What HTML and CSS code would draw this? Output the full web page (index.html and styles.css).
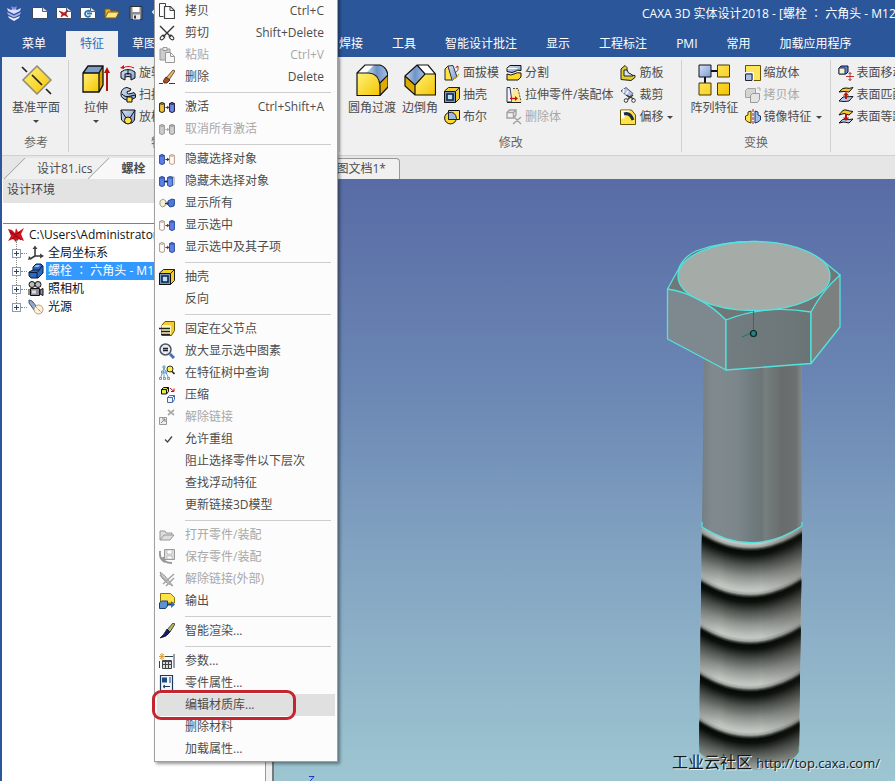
FILE: index.html
```html
<!DOCTYPE html>
<html lang="zh-CN">
<head>
<meta charset="utf-8">
<title>CAXA 3D 实体设计2018</title>
<link rel="stylesheet" href="styles.css">
</head>
<body>
<svg class="sprite" aria-hidden="true">
  <defs>
    <linearGradient id="gy" x1="0" y1="0" x2="1" y2="1"><stop offset="0" stop-color="#fff27a"/><stop offset="1" stop-color="#f5c400"/></linearGradient>
    <linearGradient id="gb" x1="0" y1="0" x2="1" y2="1"><stop offset="0" stop-color="#d5e2f7"/><stop offset="1" stop-color="#7d9bd0"/></linearGradient>
    <linearGradient id="gs" x1="0" y1="0" x2="1" y2="0"><stop offset="0" stop-color="#c8daf0"/><stop offset=".5" stop-color="#6f93c8"/><stop offset="1" stop-color="#a9c2e2"/></linearGradient>
  </defs>
  <symbol id="logo" viewBox="0 0 16 16"><path d="M1 3l4 2 3-2 3 2 4-2-1 3-6 3-6-3z" fill="#d9dcff"/><path d="M5 1l3 1.500L11 1l-1 3-2 1-2-1z" fill="#8b8fe8"/><path d="M1 7l7 3.500L15 7l-1 2.500-6 3-6-3z" fill="#a9adf6"/><path d="M2 11l6 2.500 6-2.500-1 2-5 3-5-3z" fill="#f0f1ff"/></symbol>
  <symbol id="page" viewBox="0 0 16 16"><path d="M.5 2.500h10l5 4v7H.5z" fill="#fff" stroke="#3b4a60"/><path d="M10.500 2.500v4h5" fill="#dbe2ec" stroke="#55657c"/></symbol>
  <symbol id="pagex" viewBox="0 0 16 16"><use href="#page"/><path d="M3 6l3 1 2 1 4-3-2 4 2 3-4-2-3 2 1-3z" fill="#cf1417" stroke="#8d0b0d" stroke-width=".5"/></symbol>
  <symbol id="pagec" viewBox="0 0 16 16"><use href="#page"/><path d="M10 6.500a3 3 0 1 0 .5 4M7 8.500h5" fill="none" stroke="#2779b8" stroke-width="1.800"/></symbol>
  <symbol id="open" viewBox="0 0 16 16"><path d="M1 13V4h5l1 2h6v2" fill="#e8b530" stroke="#7a5a0b"/><path d="M1 13l3-6h11l-3 6z" fill="#ffe481" stroke="#7a5a0b"/></symbol>
  <symbol id="save" viewBox="0 0 16 16"><path d="M2 1.500h12v13H3l-1-1z" fill="#8a8d93" stroke="#2b2f36"/><path d="M4.500 2h7v5h-7z" fill="#fff"/><path d="M5 9.500h7v5H5z" fill="#e9eaec"/><path d="M6 10.500h2v3H6z" fill="#333"/></symbol>
  <symbol id="undo" viewBox="0 0 16 16"><path d="M5 3L1 7l4 4M1 7h12" fill="none" stroke="#dfe8f6" stroke-width="2"/></symbol>

  <symbol id="plane" viewBox="0 0 32 32"><path d="M17 2l14 14-14 14L3 16z" fill="url(#gy)" stroke="#8b8a78" stroke-width="1.500"/><path d="M2 3l5 5M12 11l10 10M26 25l5 5" stroke="#222" stroke-width="1.700"/></symbol>
  <symbol id="extrude" viewBox="0 0 32 32"><path d="M3 9l5-7h15l-4 7z" fill="#7c9fc9"/><path d="M3 9h16v19H3z" fill="url(#gy)"/><path d="M19 9l4-7v19l-4 7z" fill="#d9a500"/><path d="M3 9l5-7h15v19l-4 7H3zh16v19M19 9l4-7" fill="none" stroke="#111" stroke-width="1.300"/><path d="M27 27V7" stroke="#b31212" stroke-width="2"/><path d="M24 9l3-6 3 6z" fill="#b31212"/></symbol>
  <symbol id="revolve" viewBox="0 0 16 16"><path d="M1 7q7-5 14 0v6l-4 2v-3q-3-1-6 0v3l-4-2z" fill="url(#gb)" stroke="#111"/><path d="M5 12V9q3-1 6 0v3M8 5v5" fill="none" stroke="#111"/><path d="M3 3q5-3 11 0" fill="none" stroke="#c11" stroke-width="1.200"/><path d="M0 3l4-3v4z" fill="#c11"/></symbol>
  <symbol id="sweep" viewBox="0 0 16 16"><path d="M1 6q1-5 6-5.500l4 1.500-1 2q-4 0-3 2 1 1.500 4 .5l3-1 1.500 2v3L9 14l-5-2Q0 10 1 6z" fill="url(#gb)" stroke="#111"/><path d="M2 7q3 4 9 2l4-1" fill="none" stroke="#111"/><path d="M7 10h5v5H7z" fill="#ffe14a" stroke="#111"/></symbol>
  <symbol id="loft" viewBox="0 0 16 16"><path d="M1 1h14l-.5 10L12 14H5l-3.500-3z" fill="url(#gb)" stroke="#111"/><path d="M1 1l5 8M15 1l-5 8" stroke="#111" fill="none"/><circle cx="8" cy="11.500" r="3.500" fill="#ffe14a" stroke="#111"/></symbol>
  <symbol id="fillet" viewBox="0 0 32 32"><path d="M1 9l8-8h15q6 1 8 9l-8 8z" fill="#fff"/><path d="M10 9l8-8h6q7 1 8 10l-7 8q-3-9-12-10z" fill="url(#gs)"/><path d="M1 9h12q10 1 11 12v11H1z" fill="url(#gy)"/><path d="M24 19l8-8v12l-8 9z" fill="#e0ab00"/><path d="M1 9l8-8h15q7 2 8 11v11l-8 8.500H1zh12q10 1 11 12v11M24 19l8-8" fill="none" stroke="#111" stroke-width="1.200"/></symbol>
  <symbol id="chamfer" viewBox="0 0 32 32"><path d="M13 1h11l7.500 9H21z" fill="#fff"/><path d="M13 1l8 9-10 11-10-9z" fill="url(#gs)"/><path d="M21 10h10.500v21H11V20z" fill="url(#gy)"/><path d="M1 12l10 9v10L1 22z" fill="#e0ab00"/><path d="M1 12L13 1h11l7.500 9v21H11L1 22zl10 9v10M11 21l10-11h10.500M13 1l8 9" fill="none" stroke="#111" stroke-width="1.200"/></symbol>
  <symbol id="draft" viewBox="0 0 16 16"><path d="M1 4l3-3 5 14H1z" fill="#ffe14a" stroke="#222"/><path d="M4 1l5-.5L13 12l-5 3z" fill="url(#gb)" stroke="#334"/><path d="M8 15l5-3 2-3" fill="none" stroke="#c9a400"/><path d="M12 7q3-1 2-5" fill="none" stroke="#b44"/><path d="M11 3l2-2.500L15.500 2z" fill="#b44"/></symbol>
  <symbol id="shell" viewBox="0 0 16 16"><path d="M.5 4l4-3.500h11v11l-4 4H.5z" fill="#f4cf2a" stroke="#222"/><path d="M.5 4.500h11v11H.5z" fill="#7897c4" stroke="#111"/><path d="M3 7h6v6H3z" fill="#b9e3ef" stroke="#10234a" stroke-width="1.600"/><path d="M11.500 4.500l4-4" stroke="#222"/></symbol>
  <symbol id="bool" viewBox="0 0 16 16"><circle cx="6.500" cy="9" r="5.900" fill="#ffd92b" stroke="#111"/><path d="M4.500 1.500h11v9h-11z" fill="#ffe14a" stroke="#111"/><path d="M4.500 3.500q7-1.500 8 6v1h-8z" fill="#9fb9de" stroke="#223"/></symbol>
  <symbol id="split" viewBox="0 0 16 16"><path d="M1 3l3-2.500h11v5q-4-1-6 1t-8 0z" fill="url(#gb)" stroke="#111"/><path d="M1 9q4 2 7 0t7-1v4l-3 3H1z" fill="#ffda2d" stroke="#111"/><path d="M1.500 3.500h10" stroke="#fff"/></symbol>
  <symbol id="stretch" viewBox="0 0 16 16"><path d="M1 15V.5h3l2 14.500z" fill="#eef3fb" stroke="#335"/><path d="M7 1h5l3 14H6z" fill="#ffe98a"/><path d="M7 1.500h5l3 13" fill="none" stroke="#555" stroke-dasharray="2 1"/><path d="M4 11.500h6" stroke="#c11" stroke-width="1.400"/><path d="M9 9l3 2.500L9 14z" fill="#c11"/><path d="M1 15.500h14" stroke="#222"/></symbol>
  <symbol id="delbody" viewBox="0 0 16 16"><path d="M1 3.500L3.500 1H10v5L7.500 9H1zh6.500V9M7.500 3.500L10 1M7 7l8 8M15 8l-8 7" fill="none" stroke="#a2a2a2" stroke-width="1.400"/></symbol>
  <symbol id="rib" viewBox="0 0 16 16"><path d="M1 4l4-3.500 2 2v7l8 1v2l-4 3-10-1z" fill="#e2cd2b" stroke="#222"/><path d="M4 5v6h9L11 9Q8 9 7 5z" fill="#d8e6f6" stroke="#222"/></symbol>
  <symbol id="trim" viewBox="0 0 16 16"><path d="M1 4l5-3.500 7 6-4 4z" fill="#b4bfe6" stroke="#556"/><path d="M4 2l-1 4M8 4L6 8" stroke="#fff" stroke-width="1.500"/><path d="M6 8l8 4M13 8l-6 5" stroke="#333" stroke-width="1.200"/><circle cx="6" cy="13.500" r="1.800" fill="#fff" stroke="#333"/><circle cx="13.500" cy="13.500" r="1.800" fill="#fff" stroke="#333"/></symbol>
  <symbol id="offset" viewBox="0 0 16 16"><path d="M.5 1h11l4 5v9.500H.5z" fill="#ffe14a" stroke="#665300"/><path d="M1 1.500h9L4 9l-3 1z" fill="#fff"/><path d="M4 5q6-2 9 6" fill="none" stroke="#1b2a44" stroke-width="3"/></symbol>
  <symbol id="array" viewBox="0 0 32 32"><path d="M13 7h7M7 13v7" stroke="#111" stroke-width="2"/><path d="M1 1h12v12H1z" fill="url(#gb)" stroke="#112"/><path d="M19.500 1h12v12h-12zM1 19h12v12H1zM19.500 19h12v12h-12z" fill="url(#gy)" stroke="#4b3900"/></symbol>
  <symbol id="scale" viewBox="0 0 16 16"><path d="M.5.500h15v15H.5z" fill="#ffe45c" stroke="#665300"/><path d="M.5 7.500h8v8h-8z" fill="#a9bfe8" stroke="#fff"/><path d="M.5 9h6.500v6.500H.5z" fill="#a9bfe8" stroke="#223"/></symbol>
  <symbol id="copybody" viewBox="0 0 16 16"><path d="M.5 3.500l2-2h8v7l-2 2h-8z" fill="#d4d4d4" stroke="#a3a3a3"/><path d="M5.500 8.500l2-2h7v6l-2 3h-7z" fill="#e3e3e3" stroke="#999"/><path d="M12 1h3v3" fill="none" stroke="#aaa"/></symbol>
  <symbol id="mirror" viewBox="0 0 16 16"><path d="M6 2v12l-3-1-2.500-2V7L3 6V3z" fill="#ffe14a" stroke="#443800"/><path d="M10 2v12l3-1 2.500-2V7L13 6V3z" fill="#9fbce9" stroke="#1c3566"/><path d="M8 0v16" stroke="#b11" stroke-dasharray="3 1"/></symbol>
  <symbol id="facemove" viewBox="0 0 16 16"><path d="M1 3l2-2h7v6L8 9H1z" fill="#5d87d6" stroke="#114"/><path d="M1 3h6v6H1z" fill="#eef4d0" stroke="#334"/><path d="M12 7.500v8M8 11.500h8M10.500 9L12 7.500 13.500 9M10.500 14l1.500 1.500 1.500-1.500" fill="none" stroke="#b33"/></symbol>
  <symbol id="facematch" viewBox="0 0 16 16"><path d="M1 5q4-5 7-4t7-.5L11 5Q6 4 1 5z" fill="#f5c92d" stroke="#111"/><path d="M1 14l4-4 10-.5L11 14q-5 1-10 0z" fill="#b5c9ee" stroke="#111"/><path d="M8 7v5" stroke="#b11" stroke-width="2"/><path d="M5 8.500h6L8 5z" fill="#b11"/></symbol>
  <symbol id="faceoffset" viewBox="0 0 16 16"><path d="M1 6q4-6 7-5t7 1.500L11 6Q6 3 1 6z" fill="#f5c92d" stroke="#111"/><path d="M1 14q4-5 7-4t7 0L11 14q-5-2-10 0z" fill="#b5c9ee" stroke="#111"/><path d="M8 5v5" stroke="#b11" stroke-width="2"/><path d="M5 8.500h6L8 12z" fill="#b11"/></symbol>

  <symbol id="copy" viewBox="0 0 16 16"><path d="M.5.500h6v3M.5.500v13h4" fill="none" stroke="#444"/><path d="M5.500 3.500h6l4 4v8h-10z" fill="#fff" stroke="#444" stroke-width="1.200"/><path d="M11 3.500v4h4.500" fill="none" stroke="#444"/></symbol>
  <symbol id="cut" viewBox="0 0 16 16"><path d="M1 1l11 11M15 1L4 12" stroke="#333" stroke-width="1.400"/><ellipse cx="3.500" cy="12.500" rx="2.700" ry="1.700" transform="rotate(-45 3.500 12.500)" fill="none" stroke="#333"/><ellipse cx="12.500" cy="12.500" rx="2.700" ry="1.700" transform="rotate(45 12.500 12.500)" fill="none" stroke="#333"/></symbol>
  <symbol id="paste" viewBox="0 0 16 16"><path d="M1 2h10v11H1z" fill="#ccc" stroke="#999"/><path d="M4 .5h4v3H4z" fill="#eee" stroke="#999"/><path d="M6.500 5.500h5l4 4v6h-9z" fill="#f7f7f7" stroke="#999"/><path d="M11.500 5.500v4h4" fill="none" stroke="#999"/></symbol>
  <symbol id="erase" viewBox="0 0 16 16"><path d="M14 1l2 1-6 9-3-2z" fill="#e7b36e" stroke="#3a2614" stroke-width=".7"/><path d="M7 8l4 3-3 3H5q-2-2 2-6z" fill="#a8502e" stroke="#3a1a10" stroke-width=".8"/><path d="M0 14.500h4M10 14.500h6" stroke="#1f3e7a"/></symbol>
  <symbol id="can" viewBox="0 0 6 11"><path d="M.6 1.500v8q2.400 2 4.800 0v-8Q3-.5.6 1.500q2.400 1.600 4.800 0" stroke-width="1"/></symbol>
  <symbol id="link" viewBox="0 0 5 6"><path d="M0 3h3" stroke="currentColor" stroke-width="1.300"/><path d="M2 .8L5 3 2 5.200z" fill="currentColor"/></symbol>
  <symbol id="pair-act" viewBox="0 0 16 16"><use href="#can" y="3" width="6" height="11" fill="#f3c43a" stroke="#222"/><use href="#can" x="10" y="3" width="6" height="11" fill="#7289e2" stroke="#14143c"/><use href="#link" x="6" y="6" width="5" height="5" color="#a31b1b"/></symbol>
  <symbol id="pair-off" viewBox="0 0 16 16"><use href="#can" y="3" width="6" height="11" fill="#ccc" stroke="#999"/><use href="#can" x="10" y="3" width="6" height="11" fill="#d0d0d0" stroke="#888"/><use href="#link" x="6" y="6" width="5" height="5" color="#aaa"/></symbol>
  <symbol id="pair-hide" viewBox="0 0 16 16"><use href="#can" y="3" width="6" height="11" fill="#5c80e8" stroke="#2c4ba0"/><use href="#can" x="10" y="3" width="6" height="11" fill="#fff8ee" stroke="#b49e90"/><use href="#link" x="6" y="6" width="5" height="5" color="#6a1b2b"/></symbol>
  <symbol id="pair-both" viewBox="0 0 16 16"><use href="#can" y="3" width="6" height="11" fill="#5c80e8" stroke="#2c4ba0"/><use href="#can" x="10" y="3" width="6" height="10" fill="#dfe3ee" stroke="#9aa"/><use href="#can" x="8" y="3" width="6" height="11" fill="#6c90f0" stroke="#2c4ba0"/><use href="#link" x="5" y="6" width="4" height="5" color="#222a55"/></symbol>
  <symbol id="pair-all" viewBox="0 0 16 16"><path d="M1 6l3-2 3 2-1 5-3 1-2-2z" fill="#f3efdc" stroke="#aaa084"/><path d="M9 6l4-2 3 1-1 6-4 1-2-2z" fill="#4c78dc" stroke="#244790"/><use href="#link" x="6" y="6" width="4" height="5" color="#333"/></symbol>
  <symbol id="pair-show" viewBox="0 0 16 16"><use href="#can" y="3" width="6" height="11" fill="#fffaf4" stroke="#a99a94"/><use href="#can" x="10" y="3" width="6" height="11" fill="#5c80e8" stroke="#2c4ba0"/><use href="#link" x="6" y="6" width="5" height="5" color="#b01919"/></symbol>
  <symbol id="fix" viewBox="0 0 16 16"><path d="M3 4l3-3.500h9.500v9l-3 5H3z" fill="#f2ce31" stroke="#6c5600"/><path d="M3 4h9v9H3z" fill="#fff4bd"/><path d="M0 7.500h11M2 10.500h9M2 13.500h9" stroke="#222" stroke-width="1.300"/></symbol>
  <symbol id="zoom" viewBox="0 0 16 16"><circle cx="6.500" cy="6.500" r="5.500" fill="#e7edf6" stroke="#4d5665" stroke-width="1.500"/><path d="M4 5.500h5M4 7.500h5" stroke="#222" stroke-width="1.300"/><path d="M11 11l4 4" stroke="#4570b8" stroke-width="3"/></symbol>
  <symbol id="treefind" viewBox="0 0 16 16"><path d="M5 3L1.500 13M5 3l4.500 10M5 7v6" fill="none" stroke="#6d9cc4"/><path d="M4 1h2v2H4zM2.500 6h2v2h-2zM6 6h2v2H6zM.5 12.500h2v2h-2zM4.500 12.500h2v2h-2zM8.500 12.500h2v2h-2z" fill="#e0f1fb" stroke="#4f88b2" stroke-width=".8"/><circle cx="11" cy="4" r="3" fill="#ffed4a" stroke="#332"/><path d="M13 6.500L15.500 9" stroke="#222" stroke-width="1.600"/></symbol>
  <symbol id="compress" viewBox="0 0 16 16"><path d="M2.500 2.500l2-2h5v4l-2 2.500h-5z" fill="#ddea3f" stroke="#111"/><path d="M2.500 2.500h5V7M7.500 2.500l2-2" fill="none" stroke="#111"/><path d="M11 1l4 3.500m-3 0h3v-3" fill="none" stroke="#b11"/><path d="M8.500 10.500l2-2h5v4l-2 3h-5zh5v4.500M13.500 10.500l2-2" fill="#eef3ff" stroke="#456aa8"/></symbol>
  <symbol id="unlink" viewBox="0 0 16 16"><path d="M.5 8.500h7v7h-7z" fill="#eee" stroke="#999"/><path d="M2 14l4-4M3 10h3v3" fill="none" stroke="#888"/><path d="M9 1l6 5M15 1L9 6" stroke="#aaa" stroke-width="1.700"/></symbol>
  <symbol id="check" viewBox="0 0 16 16"><path d="M6 8.500l2.500 2.500L13 5.500" fill="none" stroke="#444" stroke-width="1.300"/></symbol>
  <symbol id="open-off" viewBox="0 0 16 16"><path d="M1 13V4h5l1 2h6v2M1 13l4-5h10l-4 5z" fill="#ddd" stroke="#999"/></symbol>
  <symbol id="save-off" viewBox="0 0 16 16"><path d="M5.500.500h10v10h-10z" fill="#ddd" stroke="#999"/><path d="M8 1h5v4H8zM8 7h5v3H8z" fill="#fff" stroke="#aaa" stroke-width=".6"/><path d="M1 2q-1 8 5 11M4 8q0 6 9 6" fill="none" stroke="#999" stroke-width="2"/></symbol>
  <symbol id="ext-off" viewBox="0 0 16 16"><path d="M1 1l5 4 8 10-6-3-5-5z" fill="#ccc" stroke="#999"/><path d="M4 13L15 3M7 15l8-8M1 4l7 7" stroke="#a5a5a5" stroke-width="1.500"/></symbol>
  <symbol id="output" viewBox="0 0 16 16"><path d="M1.500.500h10l4 4V10h-14z" fill="#ffe34d" stroke="#8b7100"/><path d="M.5 10l2-2h6v5l-2 2.500h-6z" fill="#5c91d4" stroke="#1c4075"/><path d="M9 11.500h4" stroke="#1c4075" stroke-width="2"/><path d="M12 8l4 3.500-4 3.500z" fill="#2c68b4"/></symbol>
  <symbol id="brush" viewBox="0 0 16 16"><path d="M14 0l2 1-5 8-3-2z" fill="#b6b76a" stroke="#222" stroke-width=".8"/><path d="M8 6l3 3q-3 5-10 6 4-3 7-9z" fill="#131c66" stroke="#080c33" stroke-width=".7"/></symbol>
  <symbol id="params" viewBox="0 0 16 16"><path d="M3.500 7.500h9v8h-9z" fill="#d4dce6" stroke="#444"/><path d="M3.500 8.500h9M3.500 11.500h9M6.500 8v7M9.500 8v7" stroke="#444"/><path d="M15 1v14M6 3.500h8M.5 8v7" stroke="#345"/><path d="M3 0v7M0 3.500h6M1 1l4 5M5 1L1 6" stroke="#d9a13a"/></symbol>
  <symbol id="props" viewBox="0 0 16 16"><path d="M1.500.500h12v15h-12z" fill="#f2f6fb" stroke="#1e3a61" stroke-width="1.200"/><path d="M3 2.500h5v5H3z" fill="#1d4a80"/><path d="M10 3h2M10 5h2M10 7h2M4 11.500h7M6 10l-2 1.500L6 13" fill="none" stroke="#1e3a61"/></symbol>

  <symbol id="caxa" viewBox="0 0 16 16"><path d="M0 2l4 1 3 3 1-5 2 4 6-4-3 6 3 7-5-2-3 3-3-3-5 2 3-5z" fill="#d3121d"/><path d="M2 5l5 3 5-3M4 12l4-3 5 4" fill="none" stroke="#7d0710"/></symbol>
  <symbol id="axes" viewBox="0 0 16 16"><path d="M7 11V2M7 11h8M7 11l-5 3" stroke="#333" stroke-width="1.500"/><path d="M4.500 4L7 .5 9.500 4zM12 8.500l4 2.500-4 2.500zM0 15l1-4 3 3z" fill="#444"/></symbol>
  <symbol id="part" viewBox="0 0 16 16"><path d="M1 9l4-2V4l3-3h5l2 2v7l-5 5H3l-2-2z" fill="#2c68c2" stroke="#0b1b3d"/><path d="M5 7h6l3-4M1 9.500h8V15M9 9.500l3-3" fill="none" stroke="#0b1b3d"/><path d="M6 4l2-2h4l-1.500 2z" fill="#8fb9f1"/></symbol>
  <symbol id="camera" viewBox="0 0 16 16"><circle cx="4" cy="3.500" r="3" fill="#bbb" stroke="#111"/><circle cx="10" cy="3.500" r="3" fill="#bbb" stroke="#111"/><path d="M2.500 7.500h9v7h-9zM12 9l3-1.500v7L12 13z" fill="#8d8d99" stroke="#111"/><path d="M4 9.500h4v3H4z" fill="#ddd"/><path d="M1 8v6" stroke="#111"/></symbol>
  <symbol id="light" viewBox="0 0 16 16"><path d="M1 1l3 1 5 6-3 3-5-7z" fill="#8fa8cc" stroke="#3e5478"/><circle cx="10.500" cy="10.500" r="4.500" fill="#fff1d8" stroke="#b79a7d"/><path d="M7 7l7 7" stroke="#c33" stroke-dasharray="1 1"/></symbol>
</svg>

<div class="window">
  <header class="titlebar">
    <nav class="quick" aria-label="快速启动">
      <svg class="i16"><use href="#logo"/></svg>
      <button aria-label="新建"><svg class="i16"><use href="#page"/></svg></button>
      <button aria-label="新建设计"><svg class="i16"><use href="#pagex"/></svg></button>
      <button aria-label="新建图纸"><svg class="i16"><use href="#pagec"/></svg></button>
      <button aria-label="打开"><svg class="i16"><use href="#open"/></svg></button>
      <button aria-label="保存"><svg class="i16"><use href="#save"/></svg></button>
      <button aria-label="撤销"><svg class="i16"><use href="#undo"/></svg></button>
    </nav>
    <h1>CAXA 3D 实体设计2018 - [螺栓 <span class="colon" lang="zh-TW">：</span> 六角头 - M12.</h1>
  </header>
  <nav class="tabs">
    <div class="tab-set">
      <button class="app-menu">菜单</button>
      <button class="active">特征</button>
      <button>草图</button>
    </div>
    <div class="tab-set tools-set">
      <button>焊接</button>
      <button>工具</button>
      <button>智能设计批注</button>
      <button>显示</button>
      <button>工程标注</button>
      <button>PMI</button>
      <button>常用</button>
      <button>加载应用程序</button>
    </div>
  </nav>

  <section class="ribbon">
    <div class="group">
      <div class="tools">
        <button class="big"><svg><use href="#plane"/></svg>基准平面<i class="caret"></i></button>
      </div>
      <div class="caption">参考</div>
    </div>
    <div class="group features">
      <div class="tools">
        <button class="big"><svg><use href="#extrude"/></svg>拉伸<i class="caret"></i></button>
        <div class="stack">
          <button><svg class="i16"><use href="#revolve"/></svg>旋转</button>
          <button><svg class="i16"><use href="#sweep"/></svg>扫描</button>
          <button><svg class="i16"><use href="#loft"/></svg>放样</button>
        </div>
      </div>
      <div class="caption">特征</div>
    </div>
    <div class="group covered"></div>
    <div class="group">
      <div class="tools">
        <button class="big"><svg><use href="#fillet"/></svg>圆角过渡</button>
        <button class="big"><svg><use href="#chamfer"/></svg>边倒角</button>
        <div class="stack">
          <button><svg class="i16"><use href="#draft"/></svg>面拔模</button>
          <button><svg class="i16"><use href="#shell"/></svg>抽壳</button>
          <button><svg class="i16"><use href="#bool"/></svg>布尔</button>
        </div>
        <div class="stack">
          <button><svg class="i16"><use href="#split"/></svg>分割</button>
          <button><svg class="i16"><use href="#stretch"/></svg>拉伸零件/装配体</button>
          <button disabled><svg class="i16"><use href="#delbody"/></svg>删除体</button>
        </div>
        <div class="stack">
          <button><svg class="i16"><use href="#rib"/></svg>筋板</button>
          <button><svg class="i16"><use href="#trim"/></svg>裁剪</button>
          <button><svg class="i16"><use href="#offset"/></svg>偏移<i class="caret"></i></button>
        </div>
      </div>
      <div class="caption">修改</div>
    </div>
    <div class="group">
      <div class="tools">
        <button class="big"><svg><use href="#array"/></svg>阵列特征</button>
        <div class="stack">
          <button><svg class="i16"><use href="#scale"/></svg>缩放体</button>
          <button disabled><svg class="i16"><use href="#copybody"/></svg>拷贝体</button>
          <button><svg class="i16"><use href="#mirror"/></svg>镜像特征<i class="caret"></i></button>
        </div>
      </div>
      <div class="caption">变换</div>
    </div>
    <div class="group last">
      <div class="tools">
        <div class="stack">
          <button><svg class="i16"><use href="#facemove"/></svg>表面移动</button>
          <button><svg class="i16"><use href="#facematch"/></svg>表面匹配</button>
          <button><svg class="i16"><use href="#faceoffset"/></svg>表面等距</button>
        </div>
      </div>
    </div>
  </section>

  <nav class="docs">
    <button class="doc slant">设计81.ics</button>
    <button class="doc slant current">螺栓</button>
    <button class="doc">工程图文档1*</button>
  </nav>

  <main class="work">
    <aside class="panel">
      <h2>设计环境</h2>
      <ul class="tree">
        <li class="root"><svg class="i16"><use href="#caxa"/></svg><span>C:\Users\Administrator</span></li>
        <li><i class="plus"></i><svg class="i16"><use href="#axes"/></svg><span>全局坐标系</span></li>
        <li><i class="plus"></i><svg class="i16"><use href="#part"/></svg><span class="selected">螺栓 <b class="colon" lang="zh-TW">：</b> 六角头 - M12</span></li>
        <li><i class="plus"></i><svg class="i16"><use href="#camera"/></svg><span>照相机</span></li>
        <li><i class="plus"></i><svg class="i16"><use href="#light"/></svg><span>光源</span></li>
      </ul>
    </aside>
    <section class="viewport">
      <svg class="scene" viewBox="274 179 621 602" preserveAspectRatio="xMidYMin slice">
        <defs>
          <linearGradient id="shank"><stop offset="0" stop-color="#747e83"/><stop offset=".1" stop-color="#80898e"/><stop offset=".35" stop-color="#7c878c"/><stop offset=".5" stop-color="#6f7b7e"/><stop offset=".6" stop-color="#6d7677"/><stop offset=".63" stop-color="#777e7e"/><stop offset=".8" stop-color="#686d6c"/><stop offset=".94" stop-color="#6c7070"/><stop offset="1" stop-color="#858b8e"/></linearGradient>
          <linearGradient id="round"><stop offset="0" stop-color="#000" stop-opacity=".18"/><stop offset=".2" stop-color="#000" stop-opacity="0"/><stop offset=".6" stop-color="#201c18" stop-opacity="0"/><stop offset="1" stop-color="#201c18" stop-opacity=".3"/></linearGradient>
          <linearGradient id="front" x2="1" y2="0"><stop offset="0" stop-color="#727d81"/><stop offset="1" stop-color="#6b7475"/></linearGradient>
          <clipPath id="thread"><path d="M702 527Q752 559 802 526L799 752Q786 770 752 770T699 752z"/></clipPath>
        </defs>
        <path d="M704 355H802V526Q752 560 702 527z" fill="url(#shank)"/>
        <g clip-path="url(#thread)">
          <g id="rings" fill="none" stroke-width="2"></g>
          <path d="M699 520H802V775H699z" fill="url(#round)"/>
        </g>
        <path d="M702 522v5Q752 559 802 526v-4" fill="none" stroke="#57e0dc" stroke-width="1.300"/>
        <path d="M699 746v6q13 18 53 18t47-18v-6" fill="none" stroke="#57d8d4" stroke-opacity=".6"/>
        <g stroke="#52e3de" stroke-width="1.300" stroke-linejoin="round">
          <path d="M667.500 289L678 270Q683 257 696 251Q722 241.500 754 241.500Q794 242 822 260L840 275L811 312L726 320z" fill="#717777"/>
          <path d="M667.500 289Q700 294 726 320V370L667.500 339z" fill="#7e898f"/>
          <path d="M726 320Q766 304 811 312V363.500L726 370z" fill="url(#front)"/>
          <path d="M811 312Q822 291 840 275V327L811 363.500z" fill="#7c807f"/>
          <ellipse cx="754" cy="276" rx="76" ry="34.500" fill="#a5aba6"/>
        </g>
        <path d="M753.500 311v20M742 337l9-4" stroke="#1d7272" fill="none"/>
        <circle cx="753.500" cy="333.500" r="3" fill="#2c8080" stroke="#072626" stroke-width="1.200"/>
        <path d="M309 776.500h5l-5 6h5" fill="none" stroke="#2038c8"/>
      </svg>
      <p class="watermark">工业云社区 <span>http://top.caxa.com/</span></p>
    </section>
  </main>

  <div class="menu" role="menu">
    <button><svg class="i16"><use href="#copy"/></svg>拷贝<kbd>Ctrl+C</kbd></button>
    <button><svg class="i16"><use href="#cut"/></svg>剪切<kbd>Shift+Delete</kbd></button>
    <button disabled><svg class="i16"><use href="#paste"/></svg>粘贴<kbd>Ctrl+V</kbd></button>
    <button><svg class="i16"><use href="#erase"/></svg>删除<kbd>Delete</kbd></button>
    <hr>
    <button><svg class="i16"><use href="#pair-act"/></svg>激活<kbd>Ctrl+Shift+A</kbd></button>
    <button disabled><svg class="i16"><use href="#pair-off"/></svg>取消所有激活</button>
    <hr>
    <button><svg class="i16"><use href="#pair-hide"/></svg>隐藏选择对象</button>
    <button><svg class="i16"><use href="#pair-both"/></svg>隐藏未选择对象</button>
    <button><svg class="i16"><use href="#pair-all"/></svg>显示所有</button>
    <button><svg class="i16"><use href="#pair-show"/></svg>显示选中</button>
    <button><svg class="i16"><use href="#pair-show"/></svg>显示选中及其子项</button>
    <hr>
    <button><svg class="i16"><use href="#shell"/></svg>抽壳</button>
    <button><svg class="i16"></svg>反向</button>
    <hr>
    <button><svg class="i16"><use href="#fix"/></svg>固定在父节点</button>
    <button><svg class="i16"><use href="#zoom"/></svg>放大显示选中图素</button>
    <button><svg class="i16"><use href="#treefind"/></svg>在特征树中查询</button>
    <button><svg class="i16"><use href="#compress"/></svg>压缩</button>
    <button disabled><svg class="i16"><use href="#unlink"/></svg>解除链接</button>
    <button><svg class="i16"><use href="#check"/></svg>允许重组</button>
    <button><svg class="i16"></svg>阻止选择零件以下层次</button>
    <button><svg class="i16"></svg>查找浮动特征</button>
    <button><svg class="i16"></svg>更新链接3D模型</button>
    <hr>
    <button disabled><svg class="i16"><use href="#open-off"/></svg>打开零件/装配</button>
    <button disabled><svg class="i16"><use href="#save-off"/></svg>保存零件/装配</button>
    <button disabled><svg class="i16"><use href="#ext-off"/></svg>解除链接(外部)</button>
    <button><svg class="i16"><use href="#output"/></svg>输出</button>
    <hr>
    <button><svg class="i16"><use href="#brush"/></svg>智能渲染...</button>
    <hr>
    <button><svg class="i16"><use href="#params"/></svg>参数...</button>
    <button><svg class="i16"><use href="#props"/></svg>零件属性...</button>
    <button class="hover"><svg class="i16"></svg>编辑材质库...</button>
    <button><svg class="i16"></svg>删除材料</button>
    <button><svg class="i16"></svg>加载属性...</button>
  </div>
</div>
<script src="thread.js"></script>
</body>
</html>
```
FILE: styles.css
```css
*, *::before, *::after { box-sizing: border-box; }
body {
  margin: 0;
  font: 12px/16px "Open Sans", "Noto Sans CJK SC", sans-serif;
  color: #4c4c4c;
  overflow: hidden;
}
button {
  font: inherit;
  color: inherit;
  background: none;
  border: 0;
  padding: 0;
  margin: 0;
  white-space: nowrap;
}
button:disabled { color: #a8a8a8; }
.sprite { position: absolute; width: 0; height: 0; }
.i16 { width: 16px; height: 16px; flex: none; display: block; }
.colon { font-family: "Noto Sans CJK TC", sans-serif; font-weight: 400; line-height: 1; }

.window {
  position: relative;
  display: flex;
  flex-direction: column;
  height: 100vh;
  overflow: hidden;
  background: #f0f0f0;
  border-left: 2px solid #2b579a;
}

/* title bar */
.titlebar {
  display: flex;
  align-items: flex-start;
  height: 31px;
  flex: none;
  background: #2b579a;
  color: #fff;
  overflow: hidden;
}
.quick { display: flex; gap: 8px; padding-left: 4px; width: 640px; flex: none; height: 26px; align-items: center; }
.quick > .i16 { margin-right: 2px; }
h1 { margin: 0; padding-top: 6px; font-size: 12px; font-weight: 400; white-space: nowrap; }

.tabs {
  display: flex;
  flex: none;
  height: 26px;
  padding-left: 6px;
  background: #2b579a;
  color: #fff;
  overflow: hidden;
}
.tab-set { display: flex; flex: none; }
.tools-set { gap: 1px; margin-left: 155px; }
.tabs button { padding: 0 14px; flex: none; }
.tabs .app-menu { margin-right: 6px; }
.tabs .active { background: #f0f0f0; color: #2b6cc0; }

/* ribbon */
.ribbon {
  display: flex;
  flex: none;
  height: 99px;
  padding: 3px 0 3px 2px;
  border-bottom: 1px solid #d0d0d0;
  overflow: hidden;
}
.group {
  display: flex;
  flex-direction: column;
  flex: none;
  padding: 2px 8px 0;
  border-right: 1px solid #d0d0d0;
}
.group.features { width: 186px; padding-left: 11px; }
.group.covered { width: 85px; }
.group.last { border: 0; padding-left: 7px; }
.tools { display: flex; gap: 6px; height: 73px; }
.features .tools { gap: 8px; }
.caption { text-align: center; color: #666; }
.big { display: flex; flex-direction: column; align-items: center; align-self: flex-start; padding-top: 2px; }
.big svg { width: 32px; height: 32px; margin-bottom: 4px; }
.stack button { display: flex; align-items: center; gap: 3px; height: 22px; }
.stack + .stack { margin-left: 1px; }
.caret { border: 3px solid transparent; border-top-color: #444; border-bottom: 0; }
.big .caret { margin-top: 4px; }
.stack .caret { margin-left: 1px; }

/* document tabs */
.docs {
  display: flex;
  flex: none;
  height: 23px;
  padding: 2px 0 0 22px;
  background: #e6e6e6;
  overflow: hidden;
}
.doc {
  position: relative;
  z-index: 0;
  padding: 0 13px;
  border: 1px solid #999;
  border-width: 1px 1px 0 0;
  border-radius: 0 4px 0 0;
  background: #f0f0f0;
}
.slant { padding-right: 16px; border-right: 0; background: none; z-index: 1; }
.slant::before {
  content: "";
  position: absolute;
  z-index: -1;
  inset: -1px 0 0 -10px;
  border-left: 1px solid #999;
  background: #f0f0f0;
  transform: skewX(-45deg);
}
.current { z-index: 2; width: 191px; text-align: left; font-weight: 700; }
.current::before { background: #f8f8f8; }

/* workspace */
.work { display: flex; flex: 1; min-height: 0; }
.panel {
  display: flex;
  flex-direction: column;
  flex: 0 0 264px;
  padding-left: 1px;
  background: #fff;
  border-right: 1px solid #999;
  color: #111;
}
.panel h2 {
  margin: 0 0 20px;
  padding: 3px 4px 5px;
  background: #e3e3e3;
  color: #444;
  font-size: 12px;
  font-weight: 400;
}
.tree {
  flex: 1;
  margin: 0;
  padding: 2px 0 0 5px;
  list-style: none;
  border-top: 1px solid #808080;
}
.tree li { display: flex; align-items: center; height: 18px; gap: 2px; white-space: nowrap; }
.tree .root { gap: 5px; }
.tree span { height: 18px; line-height: 18px; padding: 0 2px; }
.tree .root span { padding: 0; }
.tree .selected { flex: 1; background: #3399ff; color: #fff; }
.plus {
  position: relative;
  width: 9px;
  height: 9px;
  margin: 0 5px 0 4px;
  border: 1px solid #8c9cb0;
  background:
    linear-gradient(#345, #345) center / 5px 1px no-repeat,
    linear-gradient(#345, #345) center / 1px 5px no-repeat;
}
.plus::before {
  content: "";
  position: absolute;
  left: 3px;
  top: -10px;
  height: 9px;
  border-left: 1px dotted #888;
}
.plus::after {
  content: "";
  position: absolute;
  left: 8px;
  top: 3px;
  width: 6px;
  border-top: 1px dotted #888;
}
.viewport {
  position: relative;
  flex: 1;
  min-width: 0;
  margin-left: 6px;
  border-left: 2px solid #77797d;
  background: linear-gradient(#586ba5, #6b87b4 35%, #7f9fbf 58%, #9dc6d1);
}
.scene { position: absolute; width: 100%; height: 100%; }
.watermark {
  position: absolute;
  right: 15px;
  bottom: 7px;
  margin: 0;
  font-size: 16px;
  line-height: 22px;
  color: #16191c;
  text-shadow: 1px 1px 0 #e8f2f4;
}
.watermark span { font-size: 13px; }

/* context menu */
.menu {
  position: absolute;
  left: 152px;
  top: -3px;
  width: 184px;
  padding: 2px 2px 1px;
  border: 1px solid #a0a0a0;
  background: #fcfcfc;
  box-shadow: 2px 2px 3px rgba(0, 0, 0, .4);
  z-index: 5;
}
.menu button {
  position: relative;
  display: flex;
  align-items: center;
  gap: 10px;
  width: 100%;
  height: 22px;
  padding: 0 11px 0 2px;
}
.menu kbd { font: inherit; margin-left: auto; }
.menu hr { height: 1px; margin: 4px 4px 3px 28px; border: 0; background: #cdcdcd; }
.menu .hover { background: #e0e0e0; }
.hover::after {
  content: "";
  position: absolute;
  left: -5px;
  top: -4px;
  width: 144px;
  height: 30px;
  border: 3px solid #c4252f;
  border-radius: 9px;
}
```
FILE: thread.js
```js
// Shades the threaded part of the bolt with one curved stroke per pixel row.
const stops = [[0, 6], [4, 12], [14, 78], [26, 142], [36, 184], [40, 196], [43, 160], [45, 60], [47, 6]];
const pitch = 47;
const rings = document.getElementById("rings");
for (let y = 515; y < 772; y++) {
  const phase = (y - 535 + pitch) % pitch;
  const i = stops.findIndex((s) => s[0] > phase);
  const [p0, v0] = stops[i - 1];
  const [p1, v1] = stops[i];
  const v = Math.round(v0 + ((v1 - v0) * (phase - p0)) / (p1 - p0));
  const path = document.createElementNS("http://www.w3.org/2000/svg", "path");
  path.setAttribute("d", `M698 ${y}Q751 ${y + 34} 804 ${y - 1}`);
  path.setAttribute("stroke", `rgb(${v},${v + 5},${v})`);
  rings.appendChild(path);
}
```
